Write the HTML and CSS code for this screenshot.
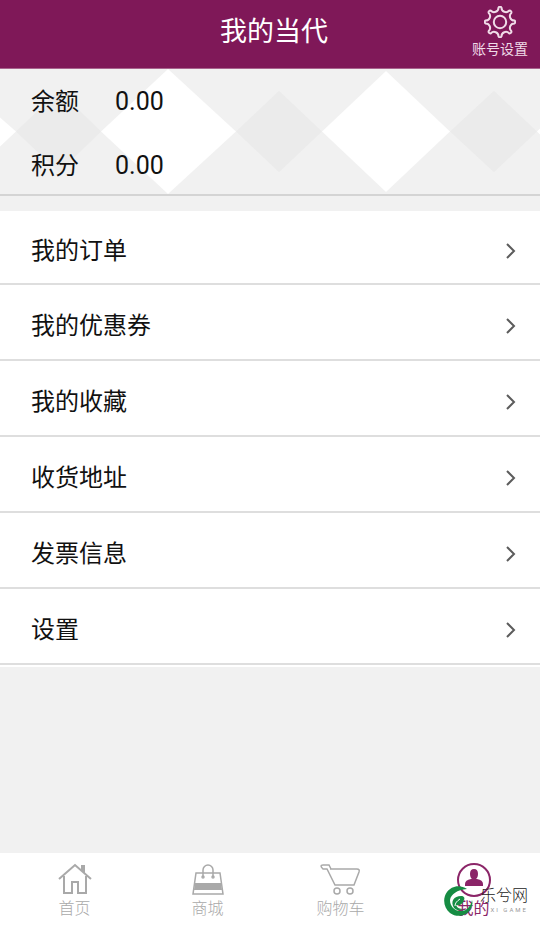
FILE: index.html
```html
<!DOCTYPE html>
<html lang="zh-CN">
<head>
<meta charset="utf-8">
<meta name="viewport" content="width=device-width, initial-scale=1">
<title>我的当代</title>
<link rel="stylesheet" href="styles.css">
</head>
<body>
<div class="app">
  <header class="header">
    <h1 class="title">我的当代</h1>
    <a class="account" href="#account">
      <svg class="gear" viewBox="-16 -16 32 32" aria-hidden="true">
        <path d="M-1.5-14.4A1.7 1.7 0 0 1 1.5-14.4A4.4 4.4 0 0 0 9.1-11.3A1.7 1.7 0 0 1 11.3-9.1A4.4 4.4 0 0 0 14.4-1.5A1.7 1.7 0 0 1 14.4 1.5A4.4 4.4 0 0 0 11.3 9.1A1.7 1.7 0 0 1 9.1 11.3A4.4 4.4 0 0 0 1.5 14.4A1.7 1.7 0 0 1-1.5 14.4A4.4 4.4 0 0 0-9.1 11.3A1.7 1.7 0 0 1-11.3 9.1A4.4 4.4 0 0 0-14.4 1.5A1.7 1.7 0 0 1-14.4-1.5A4.4 4.4 0 0 0-11.3-9.1A1.7 1.7 0 0 1-9.1-11.3A4.4 4.4 0 0 0-1.5-14.4Z"/>
        <circle r="6.2"/>
      </svg>
      <span>账号设置</span>
    </a>
  </header>

  <section class="summary">
    <svg class="diamonds" viewBox="0 0 540 126" preserveAspectRatio="none" aria-hidden="true">
      <g fill="#ebebeb">
        <path d="M16 63l43-41 42 41-42 41z"/>
        <path d="M236 63l43-41 43 41-43 41z"/>
        <path d="M450 63l44-41 43 41-43 41z"/>
      </g>
      <g fill="#fff">
        <path d="M0 49l16 14-16 15z"/>
        <path d="M101 63L168 0l68 63-68 63z"/>
        <path d="M322 63l64-61 64 61-64 61z"/>
        <path d="M537 63l3-3v6z"/>
      </g>
    </svg>
    <dl class="figures">
      <div class="figure"><dt>余额</dt><dd>0.00</dd></div>
      <div class="figure"><dt>积分</dt><dd>0.00</dd></div>
    </dl>
  </section>

  <main class="content">
    <nav class="menu">
      <a class="row" href="#orders">我的订单<svg class="chevron" viewBox="0 0 10 16" aria-hidden="true"><path d="M1 1l7 7-7 7"/></svg></a>
      <a class="row" href="#coupons">我的优惠券<svg class="chevron" viewBox="0 0 10 16" aria-hidden="true"><path d="M1 1l7 7-7 7"/></svg></a>
      <a class="row" href="#favorites">我的收藏<svg class="chevron" viewBox="0 0 10 16" aria-hidden="true"><path d="M1 1l7 7-7 7"/></svg></a>
      <a class="row" href="#address">收货地址<svg class="chevron" viewBox="0 0 10 16" aria-hidden="true"><path d="M1 1l7 7-7 7"/></svg></a>
      <a class="row" href="#invoice">发票信息<svg class="chevron" viewBox="0 0 10 16" aria-hidden="true"><path d="M1 1l7 7-7 7"/></svg></a>
      <a class="row" href="#settings">设置<svg class="chevron" viewBox="0 0 10 16" aria-hidden="true"><path d="M1 1l7 7-7 7"/></svg></a>
    </nav>
  </main>

  <nav class="tabs">
    <a class="tab" href="#home">
      <svg viewBox="0 0 40 34" aria-hidden="true">
        <path d="M4 18L20 4l16 14M9 15v17h8V21h6v11h8V15" stroke-width="2"/>
        <path d="M26 4h4v9l-4-4z" fill="currentColor" stroke="none"/>
      </svg>
      <span>首页</span>
    </a>
    <a class="tab" href="#mall">
      <svg viewBox="0 0 40 34" aria-hidden="true">
        <path d="M8 12h24l3 21H5z"/>
        <path d="M7 22h26l1 7H6z" fill="currentColor" stroke="none"/>
        <path d="M15 16V9a5 5 0 0 1 10 0v7"/>
        <circle cx="15" cy="16" r="1"/><circle cx="25" cy="16" r="1"/>
      </svg>
      <span>商城</span>
    </a>
    <a class="tab" href="#cart">
      <svg viewBox="0 0 40 34" aria-hidden="true">
        <path d="M9 8h27q3 0 2 3l-5 13H14L6 8H2q-4-4 0-4h6l2 4"/>
        <circle cx="16" cy="30" r="3"/><circle cx="29" cy="30" r="3"/>
      </svg>
      <span>购物车</span>
    </a>
    <a class="tab active" href="#mine">
      <svg viewBox="0 0 40 34" aria-hidden="true">
        <circle cx="20" cy="19" r="16" stroke-width="2"/>
        <path d="M11 25v-2q0-4 6-5h6q6 1 6 5v2zM20 8q4 0 4 5t-4 6q-4-1-4-6t4-5z" fill="currentColor" stroke="none"/>
      </svg>
      <span>我的</span>
    </a>
    <div class="brand">
      <svg class="swirl" viewBox="0 0 30 30" aria-hidden="true">
        <path class="leaf" d="M23 3C16-2 7 0 3 6-2 13 0 22 6 27c7 5 16 3 20-3 2-3 3-6 2-10-1 6-5 11-11 11C10 25 6 20 6 14 7 8 13 4 23 3z"/>
        <path class="leaf" d="M10 22C6 15 10 10 17 10c3 0 4 2 3 4-1 4-4 6-8 5 1 3 4 4 7 4-4 2-7 1-9-1z"/>
        <path class="gap" d="M11 20c0-3 2-5 5-7"/>
      </svg>
      <div class="brand-text"><span class="brand-name">乐兮网</span><span class="brand-sub">XI GAME</span></div>
    </div>
  </nav>
</div>
</body>
</html>
```

FILE: styles.css
```css
* {
  box-sizing: border-box;
}

body {
  margin: 0;
  background: #f1f1f1;
  color: #111;
  font-family: Roboto, "Noto Sans CJK SC", sans-serif;
}

a {
  color: inherit;
  text-decoration: none;
}

svg {
  display: block;
  flex: none;
  fill: none;
  stroke: currentColor;
}

.app {
  display: flex;
  flex-direction: column;
  min-height: 100vh;
}

.header {
  display: grid;
  grid-template-columns: 1fr auto 1fr;
  height: 69px;
  padding: 0 12px 0 20px;
  background: #7f1858;
  border-bottom: 1px solid #a8648e;
  color: #fff;
}

.title {
  grid-column: 2;
  margin: 0;
  font-size: 27px;
  font-weight: 400;
  line-height: 64px;
}

.account {
  justify-self: end;
  display: flex;
  flex-direction: column;
  align-items: center;
  padding-top: 6px;
  color: #f0dce8;
  font-size: 14px;
  line-height: 22px;
}

.gear {
  width: 32px;
  height: 32px;
  stroke-width: 2;
}

.summary {
  display: grid;
  height: 127px;
  border-bottom: 2px solid #d4d4d4;
}

.diamonds,
.figures {
  grid-area: 1 / 1;
}

.diamonds {
  width: 100%;
  height: 125px;
  stroke: none;
}

.figures {
  margin: 0;
  padding: 1px 0 0 31px;
  font-size: 24px;
  line-height: 64px;
}

.figure {
  display: flex;
  gap: 36px;
  height: 64px;
}

.figure dd {
  margin: 0;
  font-size: 25px;
}

.content {
  flex: 1;
  padding-top: 15px;
}

.menu {
  padding-bottom: 2px;
  background: #fff;
}

.row {
  display: flex;
  align-items: center;
  justify-content: space-between;
  height: 76px;
  padding: 8px 24px 0 31px;
  background: #fff;
  border-bottom: 2px solid #dedede;
  font-size: 24px;
  line-height: 36px;
}

.row:first-child {
  height: 74px;
}

.chevron {
  width: 10px;
  height: 16px;
  stroke: #5c5c5c;
  stroke-width: 2;
}

.tabs {
  position: relative;
  display: grid;
  grid-template-columns: repeat(4, 1fr);
  height: 74px;
  padding: 8px 0 0 8px;
  background: #fff;
  color: #a9a9a9;
}

.tab {
  display: flex;
  flex-direction: column;
  align-items: center;
  font-size: 16px;
  font-weight: 300;
  line-height: 28px;
}

.tab svg {
  width: 40px;
  height: 34px;
  overflow: visible;
  stroke-width: 1.5;
}

.tab.active {
  color: #8b2568;
  font-weight: 400;
}

.brand {
  position: absolute;
  right: 12px;
  bottom: 11px;
  display: flex;
  gap: 6px;
  color: #222;
}

.swirl {
  width: 30px;
  height: 30px;
}

.leaf {
  fill: #168c43;
  stroke: none;
}

.gap {
  stroke: #fff;
  stroke-width: 1;
}

.brand-text {
  display: flex;
  flex-direction: column;
}

.brand-name {
  font-size: 16px;
  font-weight: 300;
  line-height: 20px;
}

.brand-sub {
  align-self: flex-end;
  color: #999;
  font-size: 6px;
  letter-spacing: 2px;
  line-height: 8px;
}
```
